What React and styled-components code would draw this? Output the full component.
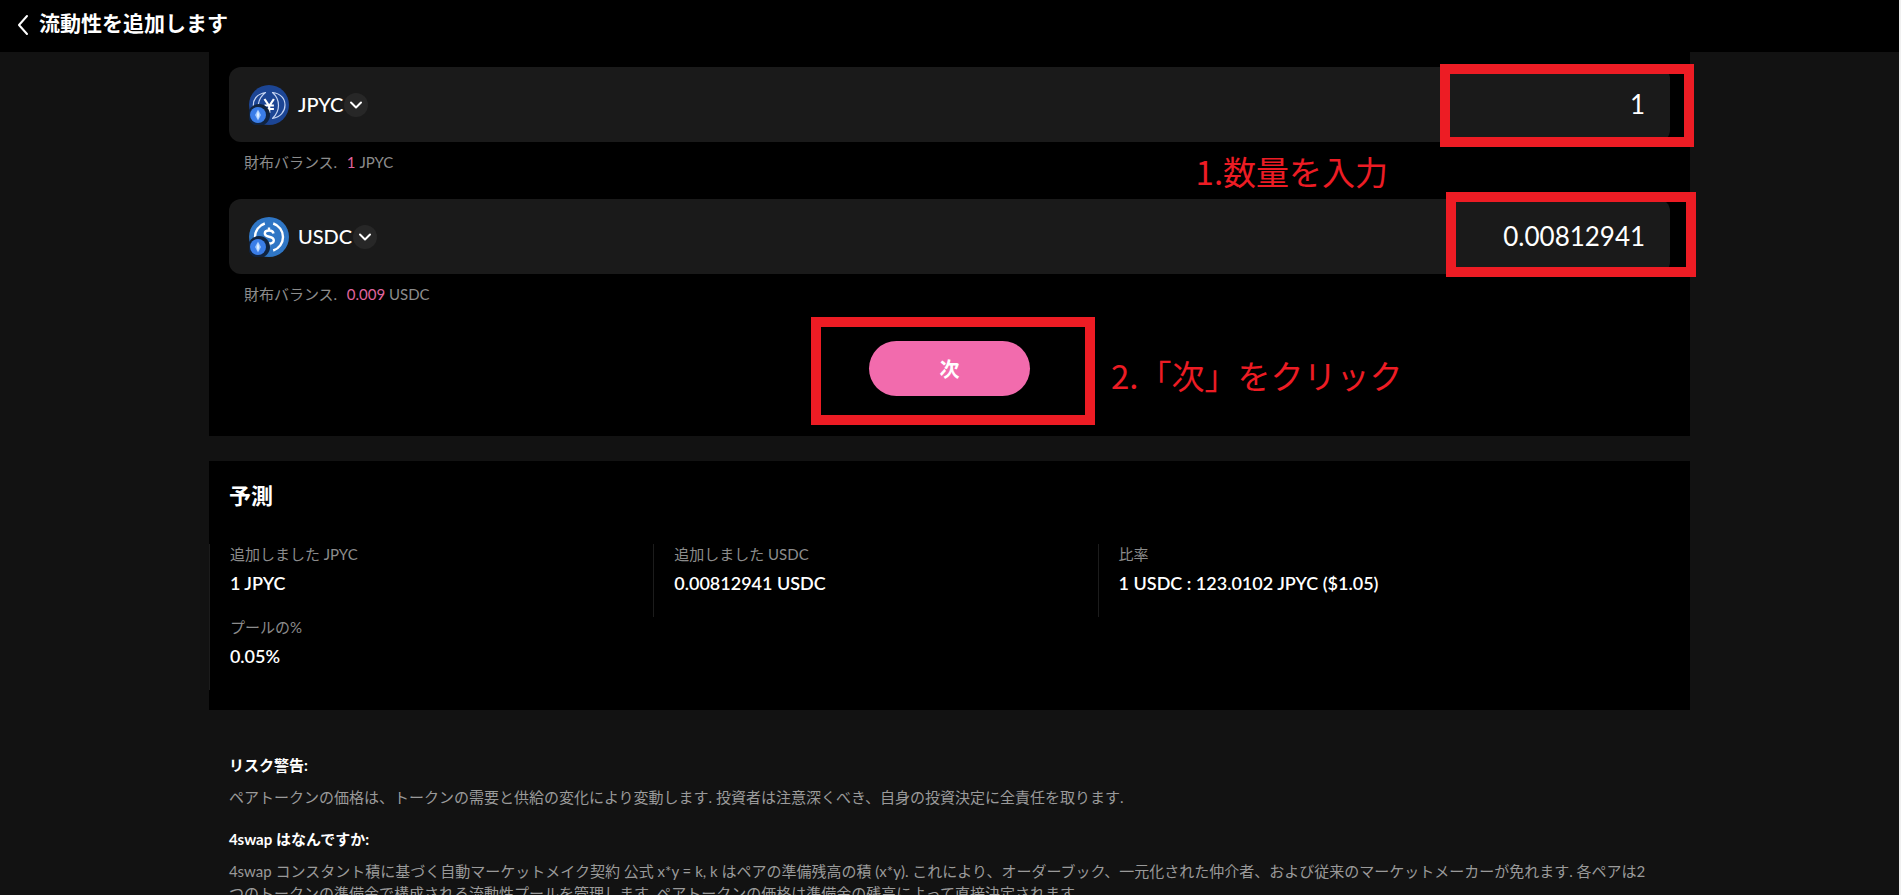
import React from "react";
import styled, { createGlobalStyle } from "styled-components";

const GlobalStyle = createGlobalStyle`
  *, *::before, *::after { box-sizing: border-box; }
  body {
    margin: 0;
    background: #121212;
    color: #fff;
    font-family: Lato, "Noto Sans CJK JP", sans-serif;
    font-size: 15px;
    line-height: 22px;
  }
  h1, h2, h3, p, dl, dd { margin: 0; }
  button, input { font-family: inherit; color: inherit; }
`;

const Page = styled.div`
  height: 100vh;
  overflow: hidden;
  border-right: 2px solid #f0f0f0;
  background: #121212;
`;

const Header = styled.header`
  display: flex;
  align-items: flex-start;
  gap: 10px;
  height: 52px;
  padding: 10px 16px;
  background: #000;
`;

const BackButton = styled.button`
  display: flex;
  padding: 4px 0 0;
  border: 0;
  background: none;
`;

const Title = styled.h1`
  font-size: 21px;
  line-height: 26px;
  font-weight: 700;
`;

const Main = styled.main`
  width: 78%;
  margin: 0 auto;
`;

const Card = styled.section`
  background: #000;
`;

const FormCard = styled(Card)`
  padding: 15px 20px 40px;
  margin-bottom: 25px;
`;

const TokenField = styled.div`
  margin-bottom: 26px;
`;

const TokenRow = styled.div`
  position: relative;
  display: flex;
  align-items: center;
  justify-content: space-between;
  height: 75px;
  padding: 0 25px 0 20px;
  border-radius: 12px;
  background: #1a1a1a;
`;

const TokenPicker = styled.button`
  display: flex;
  align-items: center;
  padding: 0;
  border: 0;
  background: none;
  font-size: 20px;
  line-height: 24px;
  font-weight: 500;
`;

const TokenName = styled.span`
  padding: 0 1px 2px 9px;
`;

const ChevronDisc = styled.span`
  display: flex;
  align-items: center;
  justify-content: center;
  width: 24px;
  height: 24px;
  border-radius: 50%;
  background: #272727;
`;

const AmountInput = styled.input`
  width: 240px;
  padding: 0 0 2px;
  border: 0;
  outline: 0;
  background: none;
  font-size: 26px;
  line-height: 32px;
  text-align: right;
`;

const Balance = styled.p`
  padding: 9px 15px 0;
  color: #8c8c8c;
  white-space: pre;
`;

const Pink = styled.span`
  margin-left: 2px;
  color: #e0649e;
`;

const Actions = styled.div`
  display: flex;
  justify-content: center;
  padding-top: 10px;
`;

const ActionAnchor = styled.div`
  position: relative;
`;

const NextButton = styled.button`
  display: block;
  width: 161px;
  height: 55px;
  border: 0;
  border-radius: 28px;
  background: #f26bad;
  font-size: 20px;
  font-weight: 700;
`;

const Marker = styled.div`
  position: absolute;
  top: ${(p) => p.$top}px;
  right: ${(p) => p.$right}px;
  width: ${(p) => p.$width}px;
  height: ${(p) => p.$height}px;
  border: 10px solid #ed1c24;
  pointer-events: none;
`;

const Note = styled.div`
  position: absolute;
  top: ${(p) => p.$top}px;
  ${(p) => p.$side}: ${(p) => p.$offset}px;
  color: #ed1c24;
  font-family: "Noto Sans CJK JP", sans-serif;
  font-size: 33px;
  font-weight: 400;
  line-height: 40px;
  white-space: nowrap;
`;

const ForecastCard = styled(Card)`
  padding: 20px 0;
`;

const CardTitle = styled.h2`
  padding: 0 20px;
  margin-bottom: 33px;
  font-size: 22px;
  line-height: 30px;
  font-weight: 700;
`;

const Stats = styled.dl`
  display: grid;
  grid-template-columns: 30% 30% 40%;
`;

const Stat = styled.div`
  height: 73px;
  padding-left: 20px;
  border-left: 1px solid #1c1c1c;

  dt {
    color: #8c8c8c;
    line-height: 20px;
  }
  dd {
    padding-top: 7px;
    font-size: 18px;
    line-height: 24px;
    font-weight: 600;
  }
`;

const Info = styled.section`
  padding: 44px 32px 0 20px;
`;

const InfoTitle = styled.h3`
  font-size: 15px;
  line-height: 22px;
  font-weight: 700;
`;

const InfoText = styled.p`
  padding: 10px 0 20px;
  color: #9a9a9a;
`;

function TokenBadge() {
  return (
    <>
      <circle cx="10" cy="30" r="11" fill="#10233f" />
      <circle cx="9" cy="30" r="8" fill="#3a7de8" />
      <path d="M9 24.500l3 5.500-3 5.500-3-5.500z" fill="#9cc6ff" />
      <path d="M9 25.500l1.200 4.500-1.200 4.500-1.200-4.500z" fill="#e0f0ff" />
    </>
  );
}

function JpycIcon() {
  return (
    <svg width="40" height="40" viewBox="0 0 40 40" aria-hidden="true">
      <circle cx="20" cy="20" r="20" fill="#1c4594" />
      <g fill="none" stroke="#c5d4f2" strokeWidth="1.2" strokeLinejoin="round">
        <path d="M16.500 7.500C8 9 3.500 14.500 4.500 22c.8 6 4 9.500 8 11-3-5-4-9.500-3-14.500.8-4.500 3-8 7-11z" />
        <path d="M23.500 7.500c8 1 12.500 6 12.500 12.500S31.500 32 23.500 33.500c4-4 6-8 6-13s-2-9.500-6-13z" />
      </g>
      <path
        d="M15.500 14l4.700 7 4.700-7M20.200 21v7M15.500 20.500h9.400M15.500 24h9.400"
        fill="none"
        stroke="#fff"
        strokeWidth="2.2"
      />
      <TokenBadge />
    </svg>
  );
}

function UsdcIcon() {
  return (
    <svg width="40" height="40" viewBox="0 0 40 40" aria-hidden="true">
      <circle cx="20" cy="20" r="20" fill="#2f76c5" />
      <g fill="none" stroke="#fff" strokeWidth="2.4">
        <path d="M15.800 6.500a14.200 14.200 0 0 0 0 27M24.200 6.500a14.200 14.200 0 0 1 0 27" />
        <path d="M24.500 16.500c-.3-2-1.900-3-4.400-3-2.600 0-4.300 1.100-4.300 3 0 4.600 9 1.800 9 6.800 0 2-1.900 3.200-4.700 3.200-2.900 0-4.600-1.200-4.800-3.400M20 10.500v3M20 26.500v3" />
      </g>
      <TokenBadge />
    </svg>
  );
}

function Chevron() {
  return (
    <ChevronDisc>
      <svg width="14" height="14" viewBox="0 0 14 14" fill="none" stroke="#fff" strokeWidth="2" strokeLinecap="round" strokeLinejoin="round" aria-hidden="true">
        <path d="M2 4.500l5 5 5-5" />
      </svg>
    </ChevronDisc>
  );
}

function Token({ icon, symbol, amount, balance, children }) {
  return (
    <TokenField>
      <TokenRow>
        <TokenPicker type="button">
          {icon}
          <TokenName>{symbol}</TokenName>
          <Chevron />
        </TokenPicker>
        <AmountInput aria-label={symbol} defaultValue={amount} inputMode="decimal" />
        {children}
      </TokenRow>
      <Balance>
        財布バランス.{"  "}
        <Pink>{balance}</Pink> {symbol}
      </Balance>
    </TokenField>
  );
}

const stats = [
  ["追加しました JPYC", "1 JPYC"],
  ["追加しました USDC", "0.00812941 USDC"],
  ["比率", "1 USDC : 123.0102 JPYC ($1.05)"],
  ["プールの%", "0.05%"],
];

export default function App() {
  return (
    <Page>
      <GlobalStyle />
      <Header>
        <BackButton type="button" aria-label="戻る">
          <svg width="13" height="22" viewBox="0 0 13 22" fill="none" stroke="#fff" strokeWidth="2" strokeLinecap="round" strokeLinejoin="round">
            <path d="M11 2L3 11l8 9" />
          </svg>
        </BackButton>
        <Title>流動性を追加します</Title>
      </Header>
      <Main>
        <FormCard>
          <Token icon={<JpycIcon />} symbol="JPYC" amount="1" balance="1">
            <Marker $top={-3} $right={-24} $width={254} $height={83} />
            <Note $top={84} $side="right" $offset={282}>1.数量を入力</Note>
          </Token>
          <Token icon={<UsdcIcon />} symbol="USDC" amount="0.00812941" balance="0.009">
            <Marker $top={-7} $right={-26} $width={250} $height={85} />
          </Token>
          <Actions>
            <ActionAnchor>
              <NextButton type="button">次</NextButton>
              <Marker $top={-24} $right={-65} $width={284} $height={108} />
              <Note $top={14} $side="left" $offset={242}>2.「次」をクリック</Note>
            </ActionAnchor>
          </Actions>
        </FormCard>
        <ForecastCard>
          <CardTitle>予測</CardTitle>
          <Stats>
            {stats.map(([label, value]) => (
              <Stat key={label}>
                <dt>{label}</dt>
                <dd>{value}</dd>
              </Stat>
            ))}
          </Stats>
        </ForecastCard>
        <Info>
          <InfoTitle>リスク警告:</InfoTitle>
          <InfoText>
            ペアトークンの価格は、トークンの需要と供給の変化により変動します. 投資者は注意深くべき、自身の投資決定に全責任を取ります.
          </InfoText>
          <InfoTitle>4swap はなんですか:</InfoTitle>
          <InfoText>
            4swap コンスタント積に基づく自動マーケットメイク契約 公式 x*y = k, k はペアの準備残高の積 (x*y). これにより、オーダーブック、一元化された仲介者、および従来のマーケットメーカーが免れます. 各ペアは2つのトークンの準備金で構成される流動性プールを管理します. ペアトークンの価格は準備金の残高によって直接決定されます.
          </InfoText>
        </Info>
      </Main>
    </Page>
  );
}
